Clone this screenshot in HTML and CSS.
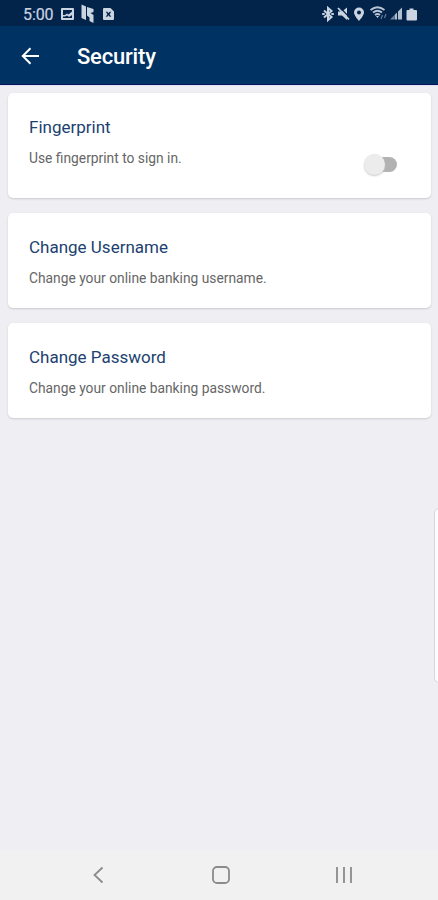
FILE: index.html
```html
<!DOCTYPE html>
<html lang="en">
<head>
<meta charset="utf-8">
<title>Security</title>
<link rel="stylesheet" href="styles.css">
</head>
<body>
<div class="screen">
  <div class="status">
    <span class="time">5:00</span>
    <svg class="notifications" width="56" height="26" viewBox="60 0 56 26" fill="#cbd4e1">
      <path fill-rule="evenodd" d="M62 8h11q1 0 1 1v10q0 1-1 1H62q-1 0-1-1V9q0-1 1-1zM63 10v5h2l2-1.500 1.500 1 3.500-3V10zM63 16.500V18h9v-3l-3 2-2-1.500-2 1z"/>
      <path d="M81.500 4.500l4.500 2v13.500l-4.500-2zM87 7l6.500 2v3l-3 1 3 2v8l-4-2v-3.500l-2.500-2z"/>
      <path fill-rule="evenodd" d="M104 8h6.500l3.500 3.500V19q0 1-1 1h-9q-1 0-1-1V9q0-1 1-1zM105.800 11.800l1.600 2.400-1.600 2.500h1.500l1.200-1.500 1.200 1.500h1.500l-1.600-2.500 1.600-2.400h-1.500l-1.200 1.400-1.200-1.400z"/>
    </svg>
    <svg class="indicators" width="98" height="26" viewBox="320 0 98 26" fill="#cbd4e1">
      <path d="M324 10.500l7.500 6.500-3.500 3V8l3.500 3-7.500 6.500M322.200 14h2.500m6.600 0h2.500" fill="none" stroke="#cbd4e1" stroke-width="2"/>
      <path d="M338 11.500h4l5-4v12.500l-5-4.500h-4z"/><path d="M340 7.500l10 10.500" stroke="#052549" stroke-width="1.200"/><path d="M338 8l11 11.500" stroke="#cbd4e1" stroke-width="1.800"/>
      <path fill-rule="evenodd" d="M359 7.500a5 5 0 0 1 5 5c0 3-5 8.500-5 8.500s-5-5.500-5-8.500a5 5 0 0 1 5-5zm0 3a2 2 0 1 0 0 4 2 2 0 0 0 0-4z"/>
      <path d="M370.500 10q7-5.500 14 0M373 12.500q4.500-3.500 9 0M375 15q2.500-2 5 0" fill="none" stroke="#b9c5d4" stroke-width="1.800"/><path d="M376 16h3l-1.500 2z"/><path d="M381 19l1.500-4M384.500 18l1.500-4" stroke="#5e7696" stroke-width="1.300"/>
      <path d="M390 19.500l4-4v4z" fill="#71869f"/><path d="M394.500 15l2.500-2.500v7h-2.500zM398 11.500l4-4v12h-4z" fill="#b1bfce"/>
      <path d="M409.500 8.500h4V10h2.500q1 0 1 1v8.500q0 1-1 1h-8.500q-1 0-1-1V11q0-1 1-1h2z"/>
    </svg>
  </div>
  <header class="appbar">
    <svg class="back" width="20" height="20" viewBox="0 0 20 20"><path d="M18 10H2M9.500 2.300L1.800 10l7.700 7.700" fill="none" stroke="#fff" stroke-width="2"/></svg>
    <h1>Security</h1>
  </header>
  <main>
    <section class="card fingerprint">
      <div><h2>Fingerprint</h2><p>Use fingerprint to sign in.</p></div>
      <span class="switch"></span>
    </section>
    <section class="card"><div><h2>Change Username</h2><p>Change your online banking username.</p></div></section>
    <section class="card"><div><h2>Change Password</h2><p>Change your online banking password.</p></div></section>
  </main>
  <nav>
    <svg width="12" height="18" viewBox="0 0 12 18"><path d="M10.500 1.500L2.500 9l8 7.500"/></svg>
    <svg width="18" height="18" viewBox="0 0 18 18"><rect x="1" y="1" width="16" height="16" rx="4"/></svg>
    <svg width="18" height="18" viewBox="0 0 18 18"><path d="M2 1v16M9 1v16M16 1v16"/></svg>
  </nav>
  <div class="edge"></div>
</div>
</body>
</html>
```
FILE: styles.css
```css
* { box-sizing: border-box; }
body { margin: 0; font-family: Roboto, sans-serif; }
.screen { position: relative; display: flex; flex-direction: column; height: 900px; overflow: hidden; background: #eeeef3; }
.status { display: flex; align-items: center; height: 26px; padding: 0 20px 0 23px; background: #02234a; }
.time { width: 37px; padding-top: 3px; color: #cbd4e1; font-size: 16px; line-height: 20px; letter-spacing: -.1px; -webkit-text-stroke: .2px; }
.indicators { margin-left: auto; }
.appbar { display: flex; align-items: center; height: 59px; padding: 1px 21px 0; background: #003263; border-bottom: 1.500px solid #09145a; }
.back { margin-right: 36px; }
h1, h2, p { margin: 0; }
h1 { color: #fff; font-size: 22px; line-height: 26px; font-weight: 500; letter-spacing: -.2px; padding-top: 2px; }
main { display: flex; flex: 1; flex-direction: column; gap: 15px; padding: 7px 7px 0 8px; border-top: 1px solid #e0e0f6; }
.card { display: flex; justify-content: space-between; height: 95px; padding: 22px 34px 0 21px; background: #fff; border-radius: 5px; box-shadow: 0 1px 2px #c9c9ce; }
.fingerprint { height: 105px; }
h2 { color: #213f70; font-size: 17px; line-height: 24px; font-weight: 400; }
p { margin-top: 9px; color: #666; font-size: 13.800px; line-height: 20px; }
.switch { position: relative; width: 27px; height: 15px; margin-top: 42px; border-radius: 8px; background: #b2b2b2; }
.switch::before { content: ""; position: absolute; left: -6px; top: -3px; width: 21px; height: 21px; border-radius: 50%; background: #ececec; box-shadow: 0 1px 2px #c9c9c9; }
nav { display: flex; align-items: center; justify-content: space-between; height: 50px; padding: 0 85px 0 92px; background: #f1f1f1; }
nav svg { fill: none; stroke: #8b8b8b; stroke-width: 1.800; }
nav svg:nth-child(2) { margin-left: 2px; }
.edge { position: absolute; top: 508px; right: -8px; width: 12px; height: 175px; background: #fcfcfe; border: 1px solid #d6d6dc; border-radius: 5px; }
```
